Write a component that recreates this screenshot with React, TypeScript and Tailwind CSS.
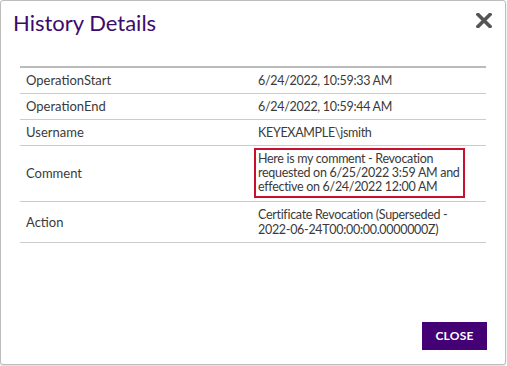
import { Fragment } from 'react';

const ROWS: { label: string; lines: string[]; boxed?: boolean }[] = [
  { label: 'OperationStart', lines: ['6/24/2022, 10:59:33 AM'] },
  { label: 'OperationEnd', lines: ['6/24/2022, 10:59:44 AM'] },
  { label: 'Username', lines: ['KEYEXAMPLE\\jsmith'] },
  {
    label: 'Comment',
    lines: ['Here is my comment - Revocation', 'requested on 6/25/2022 3:59 AM and', 'effective on 6/24/2022 12:00 AM'],
    boxed: true,
  },
  { label: 'Action', lines: ['Certificate Revocation (Superseded -', '2022-06-24T00:00:00.0000000Z)'] },
];

function Lines({ lines }: { lines: string[] }) {
  return (
    <>
      {lines.map((l, i) => (
        <Fragment key={i}>
          {i > 0 && <br />}
          <span className="whitespace-nowrap">{l}</span>
        </Fragment>
      ))}
    </>
  );
}

export default function App() {
  return (
    <div className="w-[507px] h-[366px] bg-white font-['Lato',sans-serif]">
      <div className="w-[506px] h-[365px] flex flex-col border border-[#bdbdbd] rounded-[3px] shadow-[0_1px_2px_rgba(0,0,0,0.15)] bg-white">
        {/* Header */}
        <div className="flex items-start justify-between pl-[12px] pr-[13px] pt-[8px]">
          <h1 className="text-[22px] leading-[28px] text-[#3b0b6b]">History Details</h1>
          <button type="button" className="mt-[4px] text-[#555]" aria-label="Close">
            <svg width="16" height="15" viewBox="0 0 16 15">
              <path d="M2 1.5 L14 13.5 M14 1.5 L2 13.5" stroke="currentColor" strokeWidth="3.6" strokeLinecap="square" />
            </svg>
          </button>
        </div>

        {/* Details table */}
        <div className="mx-[19px] mt-[29px] border-t-2 border-[#bbbbbb] text-[13px] leading-[15px] text-[#3a3a3a]">
          {ROWS.map((row) => (
            <div key={row.label} className="flex items-center border-b border-[#cccccc]">
              <div className="w-[234px] pl-[6px]">{row.label}</div>
              <div
                className={`flex-1 text-[12.5px] tracking-[-0.3px] ${
                  row.boxed ? 'pt-[2px] pb-[3px]' : 'py-[5px] pl-[4px] pr-[6px]'
                }`}
              >
                {row.boxed ? (
                  <div className="w-[211px] border-2 border-[#c8102e] px-[2px] py-[2px] leading-[14px]">
                    <Lines lines={row.lines} />
                  </div>
                ) : (
                  <Lines lines={row.lines} />
                )}
              </div>
            </div>
          ))}
        </div>

        {/* Footer */}
        <div className="mt-auto flex justify-end pr-[18px] pb-[14px]">
          <button
            type="button"
            className="w-[65px] h-[28px] bg-[#440075] text-white text-[12px] font-bold tracking-[0.2px]"
          >
            CLOSE
          </button>
        </div>
      </div>
    </div>
  );
}
